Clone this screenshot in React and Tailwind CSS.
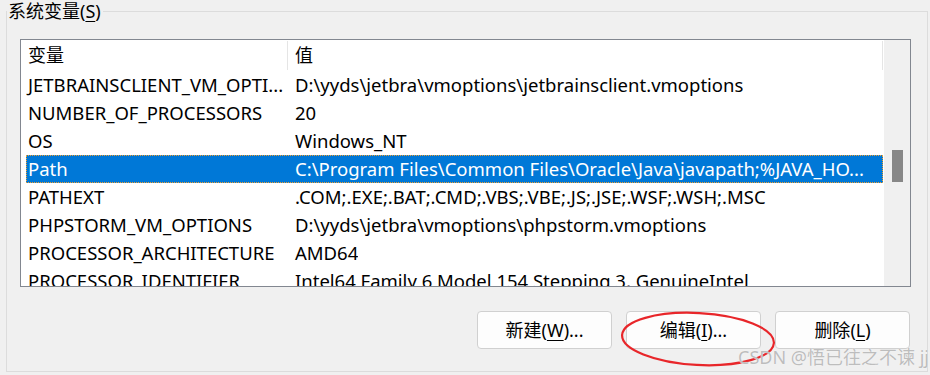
const rows = [
    ["JETBRAINSCLIENT_VM_OPTI...", "D:\\yyds\\jetbra\\vmoptions\\jetbrainsclient.vmoptions"],
    ["NUMBER_OF_PROCESSORS", "20"],
    ["OS", "Windows_NT"],
    ["Path", "C:\\Program Files\\Common Files\\Oracle\\Java\\javapath;%JAVA_HO..."],
    ["PATHEXT", ".COM;.EXE;.BAT;.CMD;.VBS;.VBE;.JS;.JSE;.WSF;.WSH;.MSC"],
    ["PHPSTORM_VM_OPTIONS", "D:\\yyds\\jetbra\\vmoptions\\phpstorm.vmoptions"],
    ["PROCESSOR_ARCHITECTURE", "AMD64"],
    ["PROCESSOR_IDENTIFIER", "Intel64 Family 6 Model 154 Stepping 3, GenuineIntel"],
]

const font = "font-['Noto_Sans','Noto_Sans_CJK_SC',sans-serif]"

function Btn({ label, hot, tail }) {
    return (
        <button className="w-[135px] h-[38px] rounded-[4px] border border-[#d0d0d0] bg-[#fdfdfd] text-[18px] text-black flex items-center justify-center">
            {label}(<span className="underline underline-offset-[3px]">{hot}</span>){tail}
        </button>
    )
}

export default function App() {
    return (
        <div className={`w-[930px] h-[375px] bg-[#f0f0f0] overflow-hidden relative text-black ${font}`}>
            <fieldset className="ml-[6px] w-[922px] h-[372px] border border-[#dcdcdc]">
                <legend className="text-[18px] leading-[22px] pl-[1px] pr-[2px]">
                    系统变量(<span className="underline underline-offset-[3px]">S</span>)
                </legend>

                {/* list */}
                <div className="ml-[13px] mt-[17px] w-[891px] h-[248px] border border-[#828790] bg-white flex overflow-hidden">
                    <div className="flex-1 flex flex-col overflow-hidden">
                        {/* header */}
                        <div className="h-[31px] flex items-stretch text-[18px] shrink-0">
                            <div className="w-[266px] pl-[7px] flex items-center">变量</div>
                            <div className="w-px bg-[#e5e5e5] my-px"></div>
                            <div className="w-[594px] pl-[7px] flex items-center">值</div>
                            <div className="w-px bg-[#e5e5e5] my-px"></div>
                        </div>
                        {rows.map(([k, v], i) => {
                            const sel = k === "Path"
                            return (
                                <div
                                    key={i}
                                    className={`ml-[5px] w-[857px] h-[28px] shrink-0 flex items-center text-[18.5px] whitespace-nowrap ${sel ? "bg-[#0078d7] text-white outline outline-1 outline-dotted outline-[#f0a030] -outline-offset-1" : ""}`}
                                >
                                    <div className="w-[267px] pl-[2px] overflow-hidden">{k}</div>
                                    <div className="pl-[2px] overflow-hidden">{v}</div>
                                </div>
                            )
                        })}
                    </div>
                    {/* scrollbar */}
                    <div className="w-[26px] bg-[#f0f0f0] flex flex-col items-center">
                        <div className="mt-[110px] w-[11px] h-[32px] bg-[#878787]"></div>
                    </div>
                </div>

                {/* buttons */}
                <div className="mt-[24px] mr-[17px] flex justify-end gap-[14px]">
                    <Btn label="新建" hot="W" tail="..." />
                    <Btn label="编辑" hot="I" tail="..." />
                    <Btn label="删除" hot="L" tail="" />
                </div>
            </fieldset>

            {/* red annotation */}
            <svg className="absolute left-0 top-0 pointer-events-none" width="930" height="375">
                <ellipse cx="698" cy="339" rx="76" ry="26" transform="rotate(3 698 339)" fill="none" stroke="#e8262a" strokeWidth="2.2" />
            </svg>

            {/* watermark */}
            <div className="absolute right-[1px] bottom-[7px] text-[18px] leading-[22px] text-[#bdbdbd] [text-shadow:0_0_1px_#ffffff]">
                CSDN @悟已往之不谏 jj
            </div>
        </div>
    )
}
